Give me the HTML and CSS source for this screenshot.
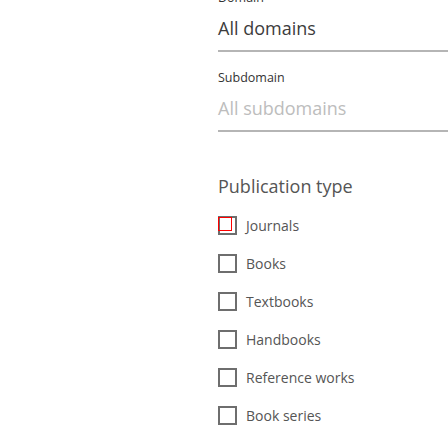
FILE: index.html
```html
<!DOCTYPE html>
<html lang="en">
<head>
<meta charset="utf-8">
<title>Filters</title>
<link rel="stylesheet" href="styles.css">
</head>
<body>
<div class="panel">
  <div class="field">
    <div class="field-label">Domain</div>
    <div class="field-value">All domains</div>
  </div>
  <div class="field">
    <div class="field-label">Subdomain</div>
    <div class="field-value placeholder">All subdomains</div>
  </div>
  <h2 class="group-title">Publication type</h2>
  <ul class="options">
    <li class="option"><span class="box"><span class="focus"></span></span><span class="option-text">Journals</span></li>
    <li class="option"><span class="box"></span><span class="option-text">Books</span></li>
    <li class="option"><span class="box"></span><span class="option-text">Textbooks</span></li>
    <li class="option"><span class="box"></span><span class="option-text">Handbooks</span></li>
    <li class="option"><span class="box"></span><span class="option-text">Reference works</span></li>
    <li class="option"><span class="box"></span><span class="option-text">Book series</span></li>
  </ul>
</div>
</body>
</html>
```
FILE: styles.css
```css
html, body {
  margin: 0;
  padding: 0;
  background: #ffffff;
  overflow: hidden;
}
body {
  font-family: "Open Sans", "Noto Sans", sans-serif;
  color: #3a3a3a;
}
.panel {
  margin-top: -28px;
  margin-left: 218px;
  width: 230px;
}
.field {
  padding-top: 18px;
  padding-bottom: 10px;
  border-bottom: 2px solid #b5b5b5;
}
.field-label {
  font-size: 12.5px;
  line-height: 16px;
  color: #333333;
}
.field-value {
  margin-top: 10px;
  font-size: 18px;
  line-height: 24px;
  color: #3c3c3c;
}
.field-value.placeholder {
  color: #bdbdbd;
}
.group-title {
  margin: 42px 0 0 0;
  font-size: 18px;
  line-height: 24px;
  font-weight: 400;
  color: #555555;
}
.options {
  list-style: none;
  margin: 18px 0 0 0;
  padding: 0;
  display: flex;
  flex-direction: column;
  gap: 19px;
}
.option {
  display: flex;
  align-items: center;
  gap: 9px;
  height: 19px;
}
.box {
  position: relative;
  box-sizing: border-box;
  width: 19px;
  height: 19px;
  border: 2px solid #6e6e6e;
  flex: none;
}
.focus {
  position: absolute;
  left: -2px;
  top: -1px;
  width: 14px;
  height: 14px;
  box-sizing: border-box;
  border: 1px solid #ff0000;
}
.option-text {
  font-size: 14px;
  line-height: 19px;
  color: #555555;
}
```
